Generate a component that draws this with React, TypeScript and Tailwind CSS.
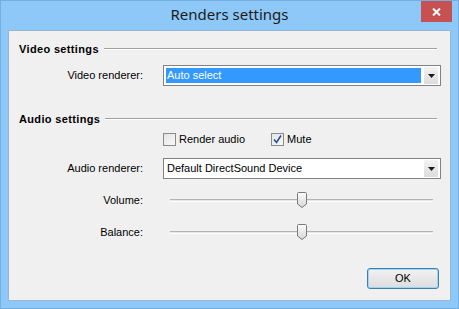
import React from "react";

const font = { fontFamily: '"Liberation Sans", Arial, sans-serif' };

function Arrow() {
  return (
    <svg width="7" height="4" viewBox="0 0 7 4">
      <path d="M0 0 H7 L3.5 4 Z" fill="#1a1a1a" />
    </svg>
  );
}

function Select({ text, selected }: { text: string; selected?: boolean }) {
  return (
    <div className="w-[278px] h-[21px] border border-[#7f8287] bg-white flex p-[2px]">
      <div
        className={
          "flex-1 flex items-center pl-[1px] text-[11px] leading-none " +
          (selected ? "bg-[#3399ff] text-white" : "text-black")
        }
      >
        {text}
      </div>
      <div className="w-[14px] ml-[3px] -my-[1px] bg-gradient-to-b from-[#f3f3f3] to-[#dcdcdc] flex items-center justify-center">
        <Arrow />
      </div>
    </div>
  );
}

function Checkbox({ checked }: { checked?: boolean }) {
  return (
    <div className="w-[13px] h-[13px] border border-[#8a8a8a] bg-gradient-to-br from-[#e4e4e4] to-[#f8f8f8] flex items-center justify-center">
      {checked && (
        <svg width="11" height="11" viewBox="0 0 11 11">
          <path d="M2 5.5 L4.5 8.5 L9 1.5" stroke="#2a4f9a" strokeWidth="1.6" fill="none" />
        </svg>
      )}
    </div>
  );
}

function Slider() {
  return (
    <div className="w-[278px] h-[16px] relative flex items-center pl-[7px] pr-[8px]">
      <div className="flex-1 h-[3px] border-t border-[#b4b4b4] bg-[#e6e6e6] border-b border-b-white" />
      <svg
        className="absolute left-[134px] top-0"
        width="10"
        height="16"
        viewBox="0 0 10 16"
      >
        <defs>
          <linearGradient id="tg" x1="0" y1="0" x2="0" y2="1">
            <stop offset="0" stopColor="#fbfbfb" />
            <stop offset="1" stopColor="#d8d8d8" />
          </linearGradient>
        </defs>
        <path
          d="M1.5 0.5 H8.5 Q9.5 0.5 9.5 1.5 V12 L5 15.5 L0.5 12 V1.5 Q0.5 0.5 1.5 0.5 Z"
          fill="url(#tg)"
          stroke="#7a7a7a"
          strokeWidth="1"
        />
      </svg>
    </div>
  );
}

function Header({ title }: { title: string }) {
  return (
    <div className="flex items-center h-[14px] pl-[10px] pr-[13px]">
      <span className="text-[11px] font-bold tracking-[0.35px] leading-none text-black">{title}</span>
      <div className="flex-1 ml-[5px] border-t border-[#a0a0a0] border-b border-b-white h-[2px]" />
    </div>
  );
}

function Row({ label, children }: { label: string; children: React.ReactNode }) {
  return (
    <div className="flex items-center">
      <div className="w-[134px] text-right text-[11px] leading-none text-black">{label}</div>
      <div className="ml-[20px]">{children}</div>
    </div>
  );
}

export default function App() {
  return (
    <div
      className="w-[459px] h-[309px] bg-[#8ec8f8] border border-[#74afe2] relative flex flex-col"
      style={font}
    >
      <div className="h-[29px] flex items-center justify-center">
        <span
          className="text-[15px] text-[#1c1c1c] leading-none -mt-[3px]"
          style={{ fontFamily: '"Noto Sans", "Open Sans", sans-serif' }}
        >
          Renders settings
        </span>
      </div>
      <div className="absolute right-[6px] top-0 w-[31px] h-[21px] bg-[#c75050] flex items-center justify-center">
        <svg width="9" height="8" viewBox="0 0 9 8">
          <path d="M1 0.5 L8 7.5 M8 0.5 L1 7.5" stroke="white" strokeWidth="2" />
        </svg>
      </div>
      <div className="mx-[7px] h-[271px] bg-[#f0f0f0] border border-[#9bb6d0] flex flex-col">
        <div className="mt-[11px]">
          <Header title="Video settings" />
        </div>
        <div className="mt-[9px]">
          <Row label="Video renderer:">
            <Select text="Auto select" selected />
          </Row>
        </div>
        <div className="mt-[26px]">
          <Header title="Audio settings" />
        </div>
        <div className="mt-[7px] flex items-center h-[13px] pl-[154px] text-[11px] leading-none">
          <Checkbox />
          <span className="ml-[3px]">Render audio</span>
          <div className="ml-[26px]">
            <Checkbox checked />
          </div>
          <span className="ml-[3px]">Mute</span>
        </div>
        <div className="mt-[12px]">
          <Row label="Audio renderer:">
            <Select text="Default DirectSound Device" />
          </Row>
        </div>
        <div className="mt-[13px]">
          <Row label="Volume:">
            <Slider />
          </Row>
        </div>
        <div className="mt-[16px]">
          <Row label="Balance:">
            <Slider />
          </Row>
        </div>
        <div className="mt-auto mb-[11px] mr-[11px] flex justify-end">
          <button className="w-[72px] h-[21px] rounded-[3px] border border-[#3c7fb1] bg-gradient-to-b from-[#f2f2f2] to-[#dddddd] shadow-[inset_0_0_0_1px_#9ed4f5] text-[11px] leading-none text-black">
            OK
          </button>
        </div>
      </div>
    </div>
  );
}
